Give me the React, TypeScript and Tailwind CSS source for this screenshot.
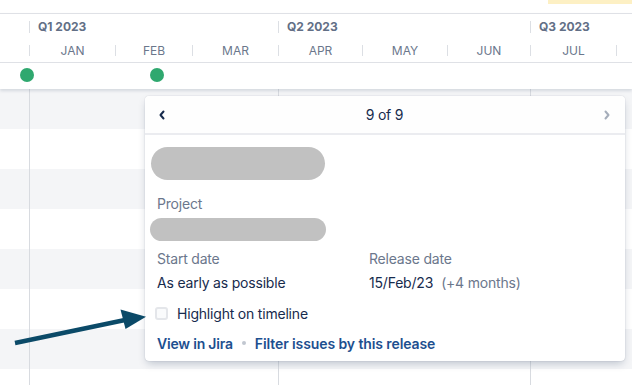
import React from "react";

const months = [
  { name: "", w: 29, tick: false },
  { name: "JAN", w: 86, tick: true },
  { name: "FEB", w: 77, tick: true },
  { name: "MAR", w: 86, tick: true },
  { name: "APR", w: 84, tick: true },
  { name: "MAY", w: 85, tick: true },
  { name: "JUN", w: 83, tick: true },
  { name: "JUL", w: 86, tick: true },
  { name: "", w: 16, tick: true },
];

const quarters = [
  { name: "", w: 29, tick: false },
  { name: "Q1 2023", w: 249, tick: true },
  { name: "Q2 2023", w: 252, tick: true },
  { name: "Q3 2023", w: 102, tick: true },
];

export default function App() {
  return (
    <div className="relative w-[632px] h-[385px] overflow-hidden bg-white font-['Inter',sans-serif] text-[#172b4d]">
      <div className="h-[13px] flex justify-end">
        <div className="w-[84px] h-[4px] bg-[#fdf0c4]" />
      </div>
      <div className="relative z-10 bg-white border-t border-[#dfe1e6] shadow-[0_2px_3px_rgba(9,30,66,0.13)]">
        <div className="flex h-[25px]">
          {quarters.map((q, i) => (
            <div key={i} className="flex items-center shrink-0" style={{ width: q.w }}>
              {q.tick && <div className="w-px h-[12px] bg-[#dcdfe4]" />}
              <span className="ml-[8px] text-[12px] font-bold text-[#626f86] leading-none">{q.name}</span>
            </div>
          ))}
        </div>
        <div className="flex h-[24px] border-b border-[#dfe1e6]">
          {months.map((m, i) => (
            <div key={i} className="flex items-center shrink-0" style={{ width: m.w }}>
              {m.tick && <div className="w-px h-[11px] bg-[#dcdfe4]" />}
              <span className="flex-1 text-center text-[12px] text-[#6b778c] leading-none">{m.name}</span>
            </div>
          ))}
        </div>
        <div className="relative h-[26px]">
          <div className="absolute left-[20px] top-[5px] w-[14px] h-[14px] rounded-full bg-[#2fa86f]" />
          <div className="absolute left-[150px] top-[5px] w-[14px] h-[14px] rounded-full bg-[#2fa86f]" />
        </div>
      </div>

      <div className="relative">
        {[0, 1, 2, 3, 4, 5, 6, 7].map((i) => (
          <div key={i} className={`h-[40px] ${i % 2 === 0 ? "bg-[#f4f5f7]" : "bg-white"}`} />
        ))}
        <div className="absolute top-0 bottom-0 left-[29px] w-px bg-[#d8dbe0]" />
        <div className="absolute top-0 bottom-0 left-[278px] w-px bg-[#d8dbe0]" />
        <div className="absolute top-0 bottom-0 left-[530px] w-px bg-[#d8dbe0]" />
      </div>

      {/* Popup */}
      <div className="absolute z-20 left-[145px] top-[96px] w-[480px] h-[265px] rounded-[4px] bg-white tracking-[-0.2px] shadow-[0_4px_8px_-2px_rgba(9,30,66,0.25),0_0_1px_rgba(9,30,66,0.31)]">
        <div className="h-[39px] flex items-center justify-between px-[12px] border-b-2 border-[#ebecf0] bg-[#fefefe] rounded-t-[4px]">
          <svg width="8" height="10" viewBox="0 0 8 10" className="ml-[1px]">
            <path d="M5.5 1.5 L2.5 5 L5.5 8.5" fill="none" stroke="#172b4d" strokeWidth="2" strokeLinecap="round" strokeLinejoin="round" />
          </svg>
          <span className="text-[14px]">9 of 9</span>
          <svg width="8" height="10" viewBox="0 0 8 10" className="mr-[2px]">
            <path d="M2.5 1.5 L5.5 5 L2.5 8.5" fill="none" stroke="#a5adba" strokeWidth="2" strokeLinecap="round" strokeLinejoin="round" />
          </svg>
        </div>
        <div className="px-[12px]">
          <div className="mt-[12px] ml-[-6px] w-[174px] h-[33px] rounded-full bg-[#c1c1c1]" />
          <div className="mt-[14px] text-[14px] leading-[20px] text-[#6b778c]">Project</div>
          <div className="mt-[4px] ml-[-7px] w-[176px] h-[23px] rounded-full bg-[#c1c1c1]" />
          <div className="mt-[8px] grid grid-cols-[212px_1fr] text-[14px] leading-[20px]">
            <div className="text-[#6b778c]">Start date</div>
            <div className="text-[#6b778c]">Release date</div>
            <div className="mt-[4px]">As early as possible</div>
            <div className="mt-[4px]">
              15/Feb/23<span className="ml-[8px] text-[#6b778c]">(+4 months)</span>
            </div>
          </div>
          <div className="mt-[10px] flex items-center h-[20px] text-[14px]">
            <div className="ml-[-2px] w-[13px] h-[13px] rounded-[3px] border-2 border-[#e4e6ea] bg-[#fafbfc]" />
            <span className="ml-[9px]">Highlight on timeline</span>
          </div>
          <div className="mt-[10px] flex items-center h-[20px] text-[14px] font-semibold text-[#1d4f8f]">
            <span>View in Jira</span>
            <span className="mx-[9px] w-[4px] h-[4px] rounded-full bg-[#c1c7d0]" />
            <span className="tracking-[-0.1px]">Filter issues by this release</span>
          </div>
        </div>
      </div>

      {/* Arrow */}
      <svg className="absolute left-0 top-0 z-30 pointer-events-none" width="632" height="385" viewBox="0 0 632 385">
        <line x1="15" y1="343" x2="125" y2="320" stroke="#0b4a68" strokeWidth="4.5" strokeLinecap="butt" />
        <polygon points="120.5,309.5 146,316.7 125.5,329" fill="#0b4a68" />
      </svg>
    </div>
  );
}
